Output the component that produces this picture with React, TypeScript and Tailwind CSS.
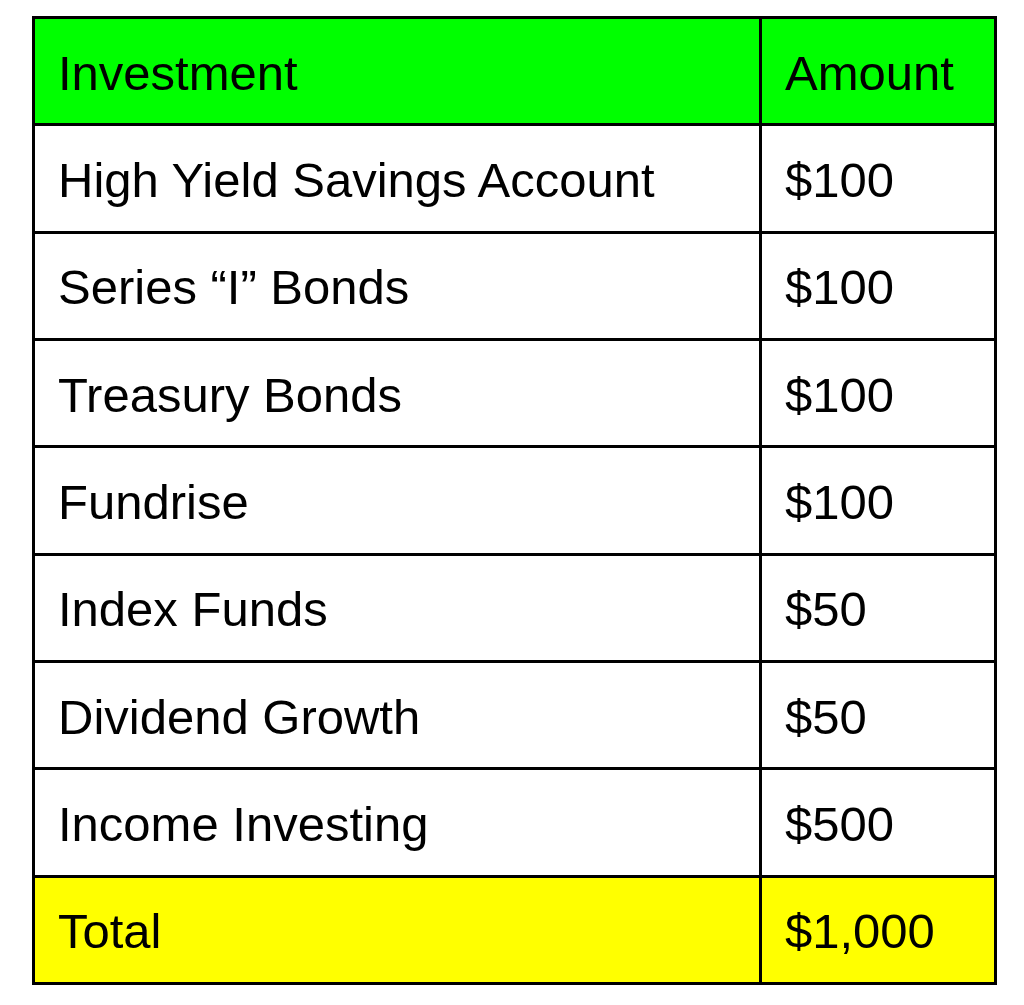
const rows = [
  { name: "High Yield Savings Account", amount: "$100" },
  { name: "Series \u201CI\u201D Bonds", amount: "$100" },
  { name: "Treasury Bonds", amount: "$100" },
  { name: "Fundrise", amount: "$100" },
  { name: "Index Funds", amount: "$50" },
  { name: "Dividend Growth", amount: "$50" },
  { name: "Income Investing", amount: "$500" },
];

function Row({ name, amount, bg, first }: { name: string; amount: string; bg: string; first?: boolean }) {
  return (
    <div className={`flex flex-1 ${bg} ${first ? "" : "border-t-[3px] border-black"}`}>
      <div className="w-[727px] border-r-[3px] border-black flex items-center pl-[23px] pt-[4px]">{name}</div>
      <div className="flex-1 flex items-center pl-[23px] pt-[4px]">{amount}</div>
    </div>
  );
}

export default function App() {
  return (
    <div className="w-[1024px] h-[1005px] bg-white pt-[16px] pl-[32px]">
      <div
        className="w-[965px] h-[969px] border-[3px] border-black flex flex-col text-black text-[49px] leading-none"
        style={{ fontFamily: '"Liberation Sans", Arial, sans-serif' }}
      >
        <Row name="Investment" amount="Amount" bg="bg-[#00ff00]" first />
        {rows.map((r) => (
          <Row key={r.name} name={r.name} amount={r.amount} bg="bg-white" />
        ))}
        <Row name="Total" amount="$1,000" bg="bg-[#ffff00]" />
      </div>
    </div>
  );
}
